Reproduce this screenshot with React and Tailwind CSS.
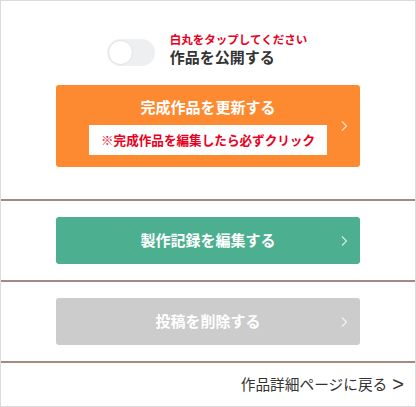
import React from 'react';

const Chevron = () => (
  <svg width="7" height="11" viewBox="0 0 7 11" className="absolute right-[12px] top-1/2 -translate-y-1/2" fill="none">
    <path d="M1 1l4.5 4.5L1 10" stroke="rgba(255,255,255,0.75)" strokeWidth="1.2" />
  </svg>
);

function ActionButton({ color, children }) {
  return (
    <button className={`relative w-[304px] mx-auto flex flex-col items-center justify-center rounded-[3px] ${color}`}>
      {children}
      <Chevron />
    </button>
  );
}

export default function App() {
  return (
    <div
      className="w-[416px] h-[407px] border border-[#dcdcdc] bg-white flex flex-col"
      style={{ fontFamily: '"Noto Sans CJK JP", "Noto Sans", sans-serif' }}
    >
      {/* publish toggle + update button */}
      <section className="pt-[30px] pb-[32px] flex flex-col">
        <div className="flex items-end justify-center gap-[15px] pr-[2px]">
          <div className="w-[48px] h-[27px] rounded-full bg-[#eeeff1] flex items-center px-[1px] mb-[1px]">
            <div className="w-[25px] h-[25px] rounded-full bg-white border border-[#e3e3e3]" />
          </div>
          <div className="flex flex-col">
            <span className="text-[11.5px] leading-[16px] font-bold text-[#e8001c]">白丸をタップしてください</span>
            <span className="text-[15px] leading-[20px] font-bold text-[#333]">作品を公開する</span>
          </div>
        </div>
        <div className="mt-[18px]">
          <ActionButton color="bg-[#fd8a31] h-[82px]">
            <span className="text-[15px] leading-[20px] font-bold text-white">完成作品を更新する</span>
            <span className="mt-[8px] w-[238px] h-[30px] bg-white flex items-center justify-center text-[12.6px] font-bold text-[#e8001c]">
              ※完成作品を編集したら必ずクリック
            </span>
          </ActionButton>
        </div>
      </section>
      <div className="h-[2px] bg-[#a58a82]" />

      <section className="py-[16px]">
        <ActionButton color="bg-[#4caf8f] h-[47px]">
          <span className="text-[15px] font-bold text-white">製作記録を編集する</span>
        </ActionButton>
      </section>
      <div className="h-[2px] bg-[#a58a82]" />

      <section className="py-[16px]">
        <ActionButton color="bg-[#cccccc] h-[47px]">
          <span className="text-[15px] font-bold text-white">投稿を削除する</span>
        </ActionButton>
      </section>
      <div className="h-[2px] bg-[#a58a82]" />

      <div className="flex-1 flex items-center justify-end pr-[11px] pb-[1px] text-[#333]">
        <span className="text-[14.7px] leading-[20px]">作品詳細ページに戻る</span>
        <span className="ml-[5px] text-[20px] leading-[20px]" style={{ fontFamily: '"Liberation Sans", sans-serif' }}>&gt;</span>
      </div>
    </div>
  );
}
